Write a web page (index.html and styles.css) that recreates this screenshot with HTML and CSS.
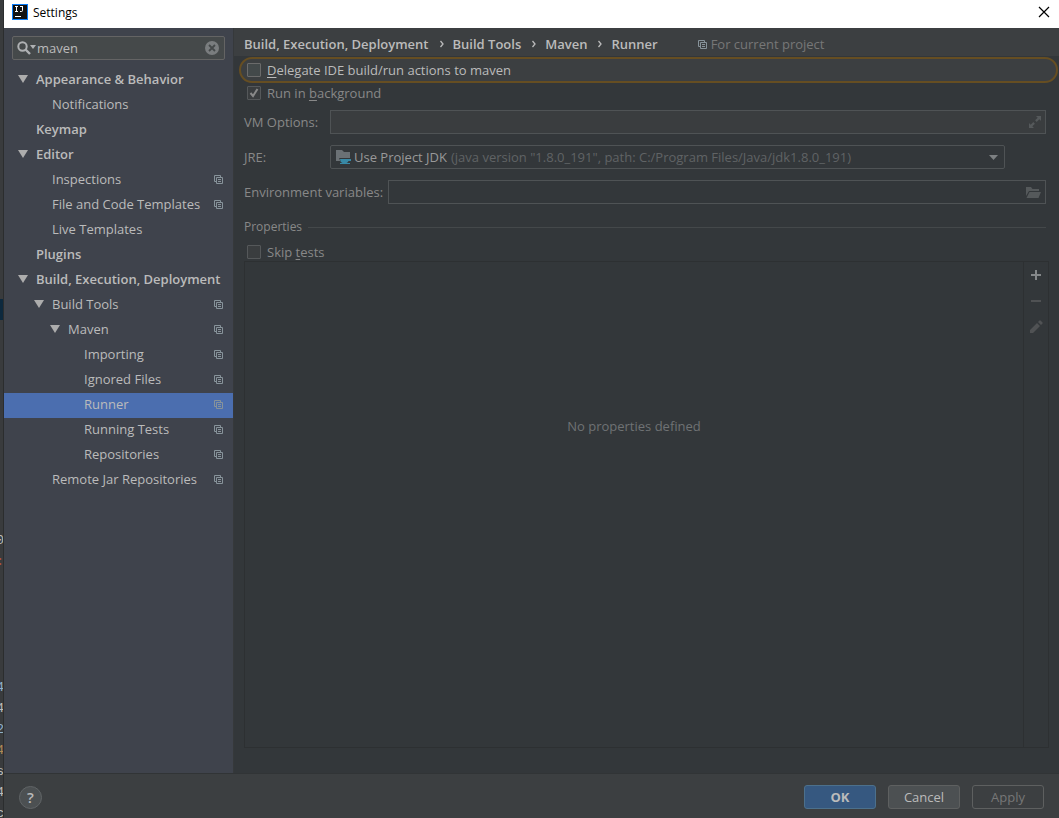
FILE: index.html
```html
<!DOCTYPE html>
<html lang="en">
<head>
<meta charset="UTF-8">
<meta name="viewport" content="width=device-width, initial-scale=1.0">
<title>Settings</title>
<link rel="stylesheet" href="styles.css">
</head>
<body>

<!-- Shared icons -->
<svg class="sprite" width="0" height="0" aria-hidden="true">
  <symbol id="copy" viewBox="0 0 9 9">
    <path d="M2 6.5H.5v-6h6V2M2.5 2.5h6v6h-6zM4 4.5h3M4 6.5h3" fill="none" stroke="currentColor"/>
  </symbol>
  <symbol id="down" viewBox="0 0 10 8">
    <path d="M0 0h10L5 8z" fill="currentColor"/>
  </symbol>
</svg>

<!-- Edge of the editor behind the dialog -->
<div class="editor">
  <div class="editor-mark"></div>
  <div class="editor-lines">
    <span>0</span><span class="red">:</span><span></span><span></span><span></span><span></span><span></span><span class="blue">4</span><span>4</span><span class="blue">2</span><span class="orange">4</span><span>s</span><span>4</span><span>c</span>
  </div>
</div>

<div class="dialog">
  <header class="titlebar">
    <svg class="logo" width="16" height="16" viewBox="0 0 16 16">
      <path fill="#087cfa" d="M0 0h16v16H0z"/>
      <path fill="#111" d="M1 1h14v14H1z"/>
      <path d="M3 2.500h3M4.500 2.500v5M3 7.500h3M8 2.500h3M10.500 2.500v4q0 1-1 1H8" fill="none" stroke="#fff"/>
      <path d="M3 12h6v1H3z" fill="#fff"/>
    </svg>
    <h1>Settings</h1>
    <button class="close" aria-label="Close">
      <svg width="12" height="12" viewBox="0 0 12 12"><path d="M1 1l10 10M11 1L1 11" stroke="#000" stroke-width="1.2"/></svg>
    </button>
  </header>

  <div class="main">
    <aside class="sidebar">
      <div class="search">
        <svg width="19" height="14" viewBox="0 0 19 14">
          <circle cx="5.5" cy="5.5" r="4.2" fill="none" stroke="#afb1b3" stroke-width="2"/>
          <path d="M8.5 8.5l4.5 4.5" stroke="#afb1b3" stroke-width="2.4"/>
          <path d="M13 4h6l-3 4z" fill="#afb1b3"/>
        </svg>
        <input type="text" value="maven" aria-label="Search settings">
        <button aria-label="Clear search">
          <svg width="14" height="14" viewBox="0 0 14 14"><circle cx="7" cy="7" r="7" fill="#7a7d7f"/><path d="M4 4l6 6M10 4l-6 6" stroke="#45494a" stroke-width="1.8"/></svg>
        </button>
      </div>
      <ul class="tree">
        <li class="group"><svg class="arrow"><use href="#down"/></svg>Appearance &amp; Behavior</li>
        <li class="level1">Notifications</li>
        <li class="group">Keymap</li>
        <li class="group"><svg class="arrow"><use href="#down"/></svg>Editor</li>
        <li class="level1">Inspections<svg class="copy"><use href="#copy"/></svg></li>
        <li class="level1">File and Code Templates<svg class="copy"><use href="#copy"/></svg></li>
        <li class="level1">Live Templates</li>
        <li class="group">Plugins</li>
        <li class="group"><svg class="arrow"><use href="#down"/></svg>Build, Execution, Deployment</li>
        <li class="level1"><svg class="arrow"><use href="#down"/></svg>Build Tools<svg class="copy"><use href="#copy"/></svg></li>
        <li class="level2"><svg class="arrow"><use href="#down"/></svg>Maven<svg class="copy"><use href="#copy"/></svg></li>
        <li class="level3">Importing<svg class="copy"><use href="#copy"/></svg></li>
        <li class="level3">Ignored Files<svg class="copy"><use href="#copy"/></svg></li>
        <li class="level3 selected">Runner<svg class="copy"><use href="#copy"/></svg></li>
        <li class="level3">Running Tests<svg class="copy"><use href="#copy"/></svg></li>
        <li class="level3">Repositories<svg class="copy"><use href="#copy"/></svg></li>
        <li class="level1">Remote Jar Repositories<svg class="copy"><use href="#copy"/></svg></li>
      </ul>
    </aside>

    <section class="content">
      <div class="breadcrumb">
        <b>Build, Execution, Deployment</b>
        <svg class="chevron" viewBox="0 0 4 8"><path d="M.5 1L3 4 .5 7" fill="none" stroke="currentColor" stroke-width="1.3"/></svg>
        <b>Build Tools</b>
        <svg class="chevron" viewBox="0 0 4 8"><path d="M.5 1L3 4 .5 7" fill="none" stroke="currentColor" stroke-width="1.3"/></svg>
        <b>Maven</b>
        <svg class="chevron" viewBox="0 0 4 8"><path d="M.5 1L3 4 .5 7" fill="none" stroke="currentColor" stroke-width="1.3"/></svg>
        <b>Runner</b>
        <span class="scope"><svg class="copy"><use href="#copy"/></svg>For current project</span>
      </div>

      <label class="check highlight"><input type="checkbox"><span><u>D</u>elegate IDE build/run actions to maven</span></label>

      <div class="form">
        <label class="check background"><input type="checkbox" checked><span>Run in <u>b</u>ackground</span></label>

        <div class="row">
          <label class="name" for="vm">VM Options:</label>
          <div class="field filled">
            <input type="text" id="vm">
            <svg width="12" height="12" viewBox="0 0 12 12" fill="#55595b"><path d="M7 0h5v5l-1.700-1.700-2.600 2.600-1.600-1.600 2.600-2.600zM0 7l1.700 1.700 2.600-2.600 1.600 1.600-2.600 2.600L5 12H0z"/></svg>
          </div>
        </div>

        <div class="row jre">
          <label class="name" for="jre">JRE:</label>
          <div class="field combo">
            <svg width="16" height="14" viewBox="0 0 16 14">
              <path d="M0 0h6l2 2h6v9H0z" fill="#6b7175"/>
              <path d="M3 8h12.500v3H12q-1 1.500-2 2H6q-2-1-2.500-4z" fill="#33373a"/>
              <path d="M4 9h11v2h-2.500q-.5 1.500-2 2h-4Q4 12 4 9zM4 13h10v1H4z" fill="#3889a6"/>
            </svg>
            <select id="jre"><option>Use Project JDK</option></select>
            <span class="hint">(java version "1.8.0_191", path: C:/Program Files/Java/jdk1.8.0_191)</span>
            <svg class="open" width="9" height="5" viewBox="0 0 9 5"><path d="M0 0h9L4.500 5z" fill="#7d8082"/></svg>
          </div>
        </div>

        <div class="row">
          <label class="name wide" for="env">Environment variables:</label>
          <div class="field">
            <input type="text" id="env">
            <svg width="15" height="11" viewBox="0 0 15 11" fill="#55595b"><path d="M0 0h5l1.500 2H13v2H3L0 9z"/><path d="M3.500 5H15l-2.500 6H.5z"/></svg>
          </div>
        </div>

        <h2 class="section">Properties</h2>
        <label class="check skip"><input type="checkbox"><span>Skip <u>t</u>ests</span></label>

        <div class="properties">
          <p class="empty">No properties defined</p>
          <div class="tools">
            <button aria-label="Add"><svg width="12" height="12" viewBox="0 0 12 12"><path d="M6 1v10M1 6h10" stroke="#85888a" stroke-width="2"/></svg></button>
            <button aria-label="Remove"><svg width="12" height="12" viewBox="0 0 12 12"><path d="M1 6h10" stroke="#505254" stroke-width="2"/></svg></button>
            <button aria-label="Edit"><svg width="14" height="14" viewBox="0 0 14 14" fill="#505254"><path d="M1 10l7-7 3 3-7 7H1zM9 2l1.500-1.500q.5-.5 1 0l2 2q.5.5 0 1L12 5z"/></svg></button>
          </div>
        </div>
      </div>
    </section>
  </div>

  <footer class="footer">
    <button class="help" aria-label="Help">?</button>
    <button class="button primary">OK</button>
    <button class="button">Cancel</button>
    <button class="button disabled" disabled>Apply</button>
  </footer>
</div>

</body>
</html>
```
FILE: styles.css
```css
* {
  box-sizing: border-box;
}

body {
  margin: 0;
  display: flex;
  height: 100vh;
  overflow: hidden;
  font-family: "Open Sans", "Noto Sans", sans-serif;
  font-size: 13px;
  line-height: 20px;
  color: #bbb;
  background-color: #3c3f41;
}

input, select, button {
  font: inherit;
  color: inherit;
  margin: 0;
  padding: 0;
  border: none;
  outline: none;
  background: none;
}

b {
  font-weight: 600;
}

svg {
  flex: none;
}

.sprite {
  position: absolute;
}

/* Editor edge */
.editor {
  flex: none;
  width: 4px;
  overflow: hidden;
  border-right: 1px solid #2b2d2e;
  background-color: #393b3d;
}

.editor-mark {
  height: 21px;
  margin-top: 299px;
  background-color: #0d293e;
}

.editor-lines {
  display: flex;
  flex-direction: column;
  align-items: flex-end;
  margin: 210px -1px 0 0;
  font-family: "Liberation Mono", monospace;
  line-height: 21px;
}

.editor-lines span {
  height: 21px;
}

.red { color: #a8553a; }
.blue { color: #8fb0cc; }
.orange { color: #b08a55; }

.dialog {
  flex: 1;
  min-width: 0;
  display: flex;
  flex-direction: column;
}

/* Title bar */
.titlebar {
  display: flex;
  align-items: center;
  height: 28px;
  padding: 0 9px 4px 8px;
  color: #000;
  background-color: #fff;
}

.titlebar h1 {
  flex: 1;
  margin: 2px 0 0 5px;
  font-size: 12px;
  font-weight: normal;
}

.close {
  display: flex;
}

.main {
  flex: 1;
  display: flex;
  min-height: 0;
}

/* Sidebar */
.sidebar {
  flex: none;
  width: 229px;
  padding-top: 8px;
  background-color: #3f434c;
}

.search {
  display: flex;
  align-items: center;
  height: 24px;
  margin: 0 8px 8px;
  padding: 0 5px 0 4px;
  border: 1px solid #646464;
  border-radius: 2px;
  background-color: #45494a;
}

.search input {
  flex: 1;
  min-width: 0;
  margin-left: 1px;
}

.search button {
  display: flex;
}

.tree {
  margin: 0;
  padding: 0;
  list-style: none;
}

.tree li {
  display: flex;
  align-items: center;
  height: 25px;
  padding: 0 10px 3px 32px;
  white-space: nowrap;
}

.tree .group { font-weight: 600; }
.tree .level1 { padding-left: 48px; }
.tree .level2 { padding-left: 64px; }
.tree .level3 { padding-left: 80px; }

.tree .selected {
  background-color: #4b6eaf;
}

.arrow {
  width: 10px;
  height: 8px;
  margin: 0 8px 0 -18px;
  color: #adadad;
}

.copy {
  width: 9px;
  height: 9px;
  color: #87939a;
}

.tree .copy {
  margin-left: auto;
}

/* Content */
.content {
  flex: 1;
  min-width: 0;
  display: flex;
  flex-direction: column;
  border-left: 1px solid #36393b;
  background-color: #33373a;
}

.breadcrumb {
  display: flex;
  align-items: center;
  height: 28px;
  padding: 4px 10px 0;
  white-space: nowrap;
  background-color: #3c3f41;
}

.chevron {
  width: 4px;
  height: 8px;
  margin: 0 9px 0 11px;
}

.scope {
  display: flex;
  align-items: center;
  gap: 4px;
  margin-left: 40px;
  color: #777;
}

.check {
  display: flex;
  align-items: center;
  gap: 6px;
  color: #888;
}

.check u {
  text-underline-offset: 2px;
}

.check input {
  appearance: none;
  width: 14px;
  height: 14px;
  border: 1px solid #55585a;
  border-radius: 1px;
  background: #3a3d3f;
}

.check input:checked {
  background: #3a3d3f url("data:image/svg+xml,%3Csvg xmlns='http://www.w3.org/2000/svg' viewBox='0 0 12 12'%3E%3Cpath d='M2.500 6L5 9l4.500-7' fill='none' stroke='%23888' stroke-width='2'/%3E%3C/svg%3E");
}

.highlight {
  height: 26px;
  margin: 1px 1px 0 5px;
  padding-left: 6px;
  border: 2px solid #664e22;
  border-radius: 13px;
  color: #bbb;
  background-color: #3c3f41;
}

.highlight input {
  border-color: #6b6b6b;
  background: #43494a;
}

.form {
  flex: 1;
  display: flex;
  flex-direction: column;
  padding: 0 10px 25px;
  color: #888;
}

.background {
  height: 20px;
  margin-bottom: 7px;
  padding-left: 3px;
}

.row {
  display: flex;
  align-items: center;
  height: 24px;
  margin: 0 3px 11px 0;
}

.name {
  width: 86px;
}

.wide {
  width: 144px;
}

.field {
  flex: 1;
  display: flex;
  align-items: center;
  height: 24px;
  padding: 0 4px 0 5px;
  border: 1px solid #4f5355;
}

.filled {
  background-color: #3a3d3f;
}

.field input {
  flex: 1;
  min-width: 0;
}

.jre {
  padding-right: 41px;
}

.combo {
  padding-right: 6px;
  border-radius: 2px;
  white-space: nowrap;
}

.combo select {
  appearance: none;
  margin: 0 3px 0 2px;
  color: #999;
}

.hint {
  color: #606365;
}

.open {
  margin-left: auto;
}

.section {
  display: flex;
  align-items: center;
  gap: 6px;
  height: 24px;
  margin: 0 3px 3px 0;
  font-size: 12px;
  font-weight: normal;
}

.section::after {
  content: "";
  flex: 1;
  height: 1px;
  background-color: #44484a;
}

.skip {
  height: 19px;
  padding-left: 3px;
}

.properties {
  flex: 1;
  display: flex;
  border: 1px solid #2d3032;
}

.empty {
  flex: 1;
  margin: 154px 0 0;
  text-align: center;
  color: #6f7274;
}

.tools {
  display: flex;
  flex-direction: column;
  width: 25px;
  border-left: 1px solid #2d3032;
}

.tools button {
  display: flex;
  align-items: center;
  justify-content: center;
  height: 26px;
}

/* Footer */
.footer {
  display: flex;
  align-items: center;
  gap: 12px;
  height: 45px;
  padding: 2px 15px 0;
  border-top: 1px solid #313436;
}

.help {
  width: 23px;
  height: 23px;
  margin-right: auto;
  border: 1px solid #606466;
  border-radius: 50%;
  font-size: 15px;
  font-weight: 600;
  background-color: #4c5052;
}

.button {
  width: 72px;
  height: 24px;
  border: 1px solid #5e6060;
  border-radius: 3px;
  background-color: #4c5052;
}

.primary {
  border-color: #4c708c;
  font-weight: bold;
  background-color: #365880;
}

.disabled {
  color: #777;
  background-color: transparent;
}
```
